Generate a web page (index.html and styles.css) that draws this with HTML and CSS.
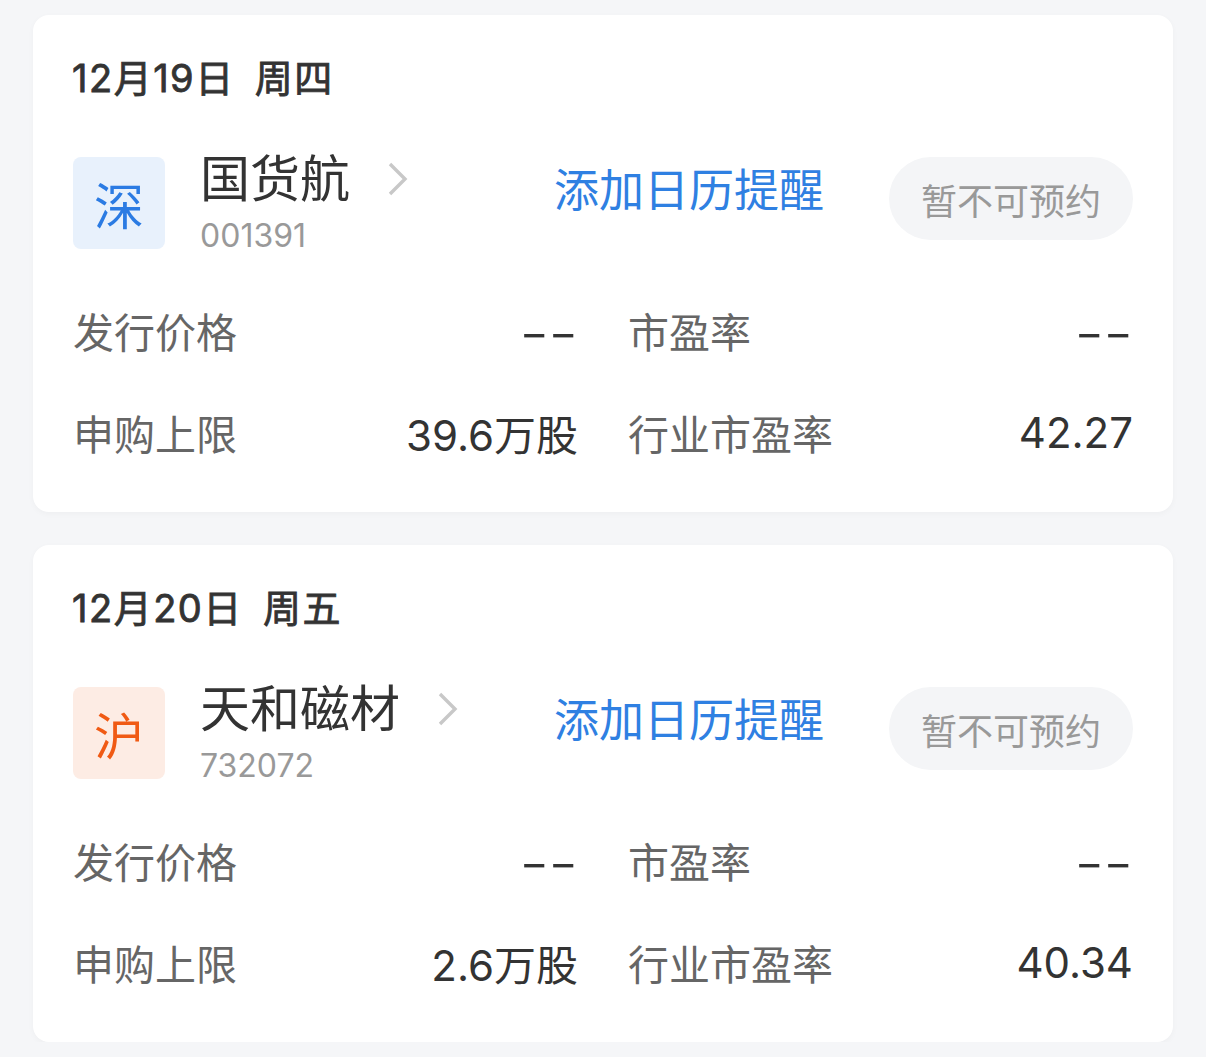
FILE: index.html
```html
<!DOCTYPE html>
<html lang="zh-CN">
<head>
  <meta charset="UTF-8" />
  <meta name="viewport" content="width=device-width, initial-scale=1.0" />
  <title>新股申购</title>
  <link rel="stylesheet" href="styles.css">
</head>
<body>

  <div class="lista">

    <div class="cartao">
      <div class="data">12月19日 周四</div>
      <div class="cabecalho">
        <div class="selo selo-sz">深</div>
        <div class="nome-bloco">
          <div class="nome-linha">
            <span class="nome">国货航</span>
            <svg class="seta" width="22" height="36" viewBox="0 0 22 36"><path d="M3 3 L18 18 L3 33" fill="none" stroke="#c8c8c8" stroke-width="3.4" /></svg>
          </div>
          <div class="codigo">001391</div>
        </div>
        <a class="lembrete">添加日历提醒</a>
        <button class="botao">暂不可预约</button>
      </div>
      <div class="dados">
        <div class="item"><span class="rotulo">发行价格</span><span class="valor traco">--</span></div>
        <div class="item"><span class="rotulo">市盈率</span><span class="valor traco">--</span></div>
        <div class="item"><span class="rotulo">申购上限</span><span class="valor">39.6万股</span></div>
        <div class="item"><span class="rotulo">行业市盈率</span><span class="valor">42.27</span></div>
      </div>
    </div>

    <div class="cartao">
      <div class="data">12月20日 周五</div>
      <div class="cabecalho">
        <div class="selo selo-sh">沪</div>
        <div class="nome-bloco">
          <div class="nome-linha">
            <span class="nome">天和磁材</span>
            <svg class="seta" width="22" height="36" viewBox="0 0 22 36"><path d="M3 3 L18 18 L3 33" fill="none" stroke="#c8c8c8" stroke-width="3.4" /></svg>
          </div>
          <div class="codigo">732072</div>
        </div>
        <a class="lembrete">添加日历提醒</a>
        <button class="botao">暂不可预约</button>
      </div>
      <div class="dados">
        <div class="item"><span class="rotulo">发行价格</span><span class="valor traco">--</span></div>
        <div class="item"><span class="rotulo">市盈率</span><span class="valor traco">--</span></div>
        <div class="item"><span class="rotulo">申购上限</span><span class="valor">2.6万股</span></div>
        <div class="item"><span class="rotulo">行业市盈率</span><span class="valor">40.34</span></div>
      </div>
    </div>

  </div>

</body>
</html>
```

FILE: styles.css
```css
body {
  background-color: #f5f6f8;
  font-family: Inter, "Noto Sans CJK SC", sans-serif;
  color: #333;
  margin: 0;
  padding: 0;
}

.lista {
  display: flex;
  flex-direction: column;
  gap: 33px;
  padding: 15px 33px 0 33px;
}

.cartao {
  background-color: #fff;
  border-radius: 16px;
  padding: 41px 40px 50px 40px;
  box-shadow: 0 2px 6px rgba(0, 0, 0, 0.03);
}

.data {
  font-size: 38px;
  line-height: 44px;
  font-weight: 400;
  -webkit-text-stroke: 0.8px #333;
  letter-spacing: 1.5px;
  word-spacing: 8px;
  color: #333;
  margin-left: -1px;
}

.cabecalho {
  display: flex;
  align-items: center;
  height: 92px;
  margin-top: 57px;
}

.selo {
  width: 92px;
  height: 92px;
  border-radius: 8px;
  display: flex;
  align-items: center;
  justify-content: center;
  font-size: 50px;
  flex-shrink: 0;
}

.selo-sz {
  background-color: #e8f1fc;
  color: #2b7be3;
}

.selo-sh {
  background-color: #fdece4;
  color: #f05a14;
}

.nome-bloco {
  flex: 1;
  margin-left: 35px;
}

.nome-linha {
  display: flex;
  align-items: center;
  gap: 37px;
  height: 58px;
}

.nome {
  font-size: 50px;
  line-height: 58px;
  color: #333;
}

.codigo {
  font-size: 32px;
  line-height: 42px;
  color: #999;
  margin-top: 7px;
}

.lembrete {
  align-self: flex-start;
  font-size: 45px;
  line-height: 60px;
  margin-top: 4px;
  color: #2f80e2;
  text-decoration: none;
  margin-right: 65px;
}

.botao {
  align-self: flex-start;
  background-color: #f4f5f7;
  color: #999;
  border: none;
  border-radius: 42px;
  height: 83px;
  padding: 0 32px;
  font-family: inherit;
  font-size: 36px;
}

.dados {
  display: grid;
  grid-template-columns: 1fr 1fr;
  column-gap: 50px;
  row-gap: 42px;
  margin-top: 51px;
}

.item {
  display: flex;
  justify-content: space-between;
  align-items: center;
  height: 60px;
}

.rotulo {
  font-size: 41px;
  color: #666;
}

.valor {
  font-size: 42px;
  color: #333;
}

.traco {
  letter-spacing: 0;
  transform: scaleX(1.5) translateY(3px);
  transform-origin: right;
}
```
